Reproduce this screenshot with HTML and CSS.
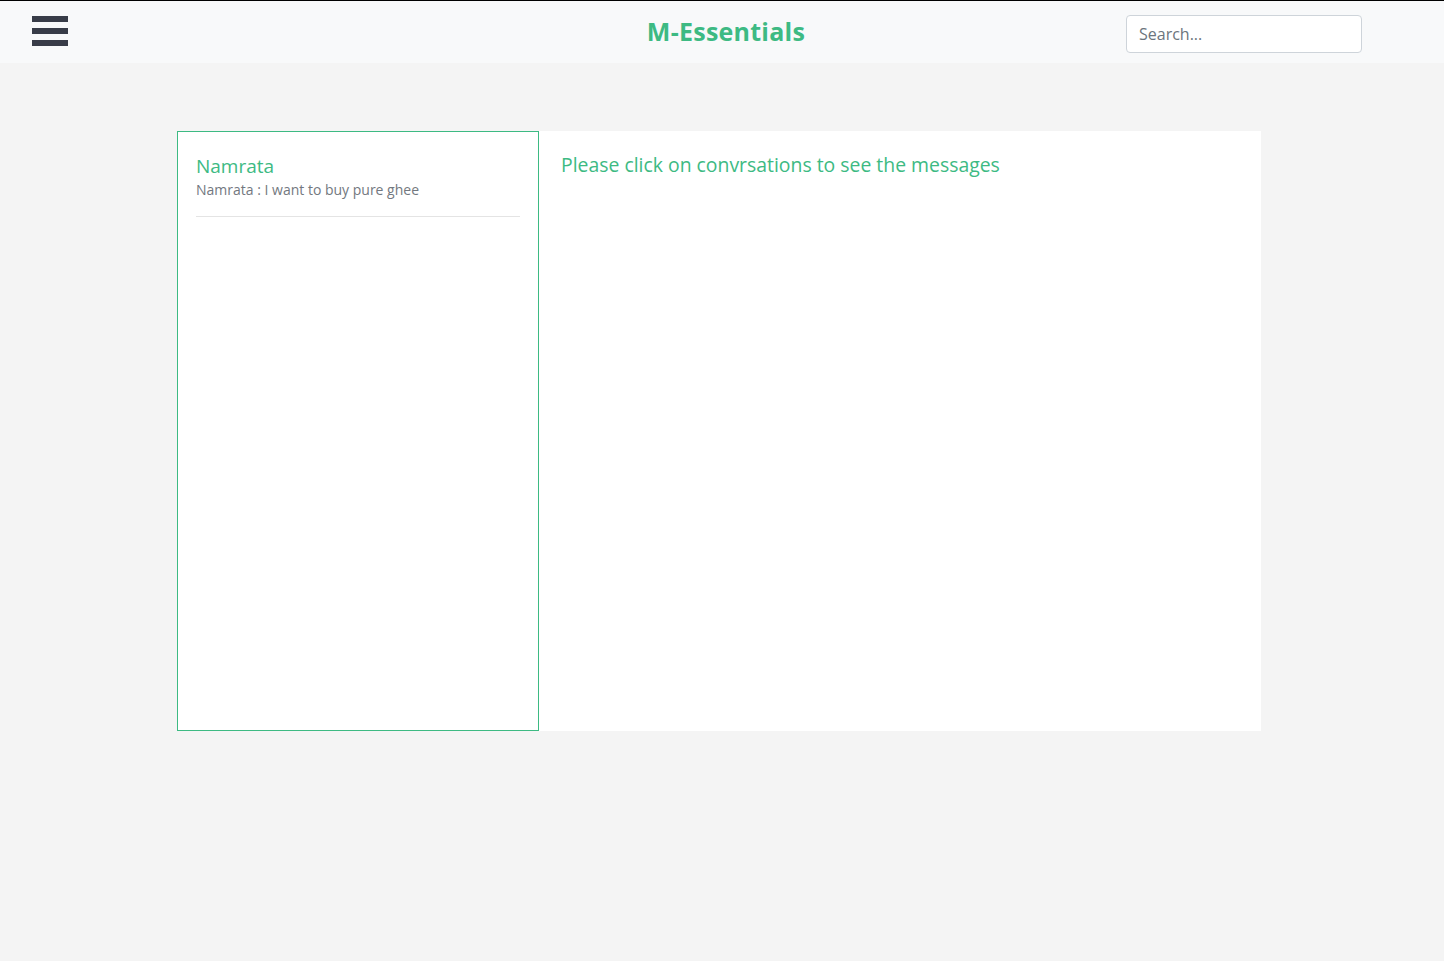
FILE: index.html
```html
<!DOCTYPE html>
<html>
<head>
<meta charset="utf-8">
<link rel="stylesheet" href="styles.css">
</head>
<body>
<header class="topbar">
  <div class="burger"><span></span><span></span><span></span></div>
  <div class="brand">M-Essentials</div>
  <div class="search-wrap"><input class="search" type="text" placeholder="Search..."></div>
</header>
<main class="page">
  <section class="chat">
    <aside class="convs">
      <div class="conv">
        <div class="conv-name">Namrata</div>
        <div class="conv-last">Namrata : I want to buy pure ghee</div>
      </div>
    </aside>
    <div class="messages">
      <p class="hint">Please click on convrsations to see the messages</p>
    </div>
  </section>
</main>
</body>
</html>
```
FILE: styles.css
```css
html, body {
  margin: 0;
  padding: 0;
  background: #f4f4f4;
  font-family: "Open Sans", "Noto Sans", sans-serif;
}
.topbar {
  height: 62px;
  border-top: 1px solid #000;
  background: #f8f9fa;
  display: grid;
  grid-template-columns: 1fr auto 1fr;
  align-items: center;
  padding: 0 82px 0 32px;
}
.burger {
  width: 36px;
  display: flex;
  flex-direction: column;
  gap: 6px;
  margin-top: -3px;
}
.burger span {
  display: block;
  height: 6px;
  background: #383c48;
}
.brand {
  color: #3dba83;
  font-weight: 700;
  font-size: 25px;
  letter-spacing: 0.25px;
  margin-left: 58px;
  margin-top: -2px;
}
.search-wrap {
  display: flex;
  justify-content: flex-end;
}
.search {
  width: 236px;
  height: 38px;
  box-sizing: border-box;
  border: 1px solid #ced4da;
  border-radius: 4px;
  background: #fff;
  padding: 0 12px;
  font-family: inherit;
  font-size: 16px;
  color: #495057;
  margin-top: 3px;
}
.search::placeholder { color: #6c757d; }
.page {
  padding: 68px 0 0 177px;
}
.chat {
  width: 1084px;
  height: 600px;
  display: flex;
  background: #fff;
}
.convs {
  width: 362px;
  box-sizing: border-box;
  border: 1px solid #3dba83;
  padding: 22px 18px 0 18px;
}
.conv {
  border-bottom: 1px solid #e4e4e4;
  padding-bottom: 16px;
}
.conv-name {
  color: #3dba83;
  font-size: 19px;
  line-height: 24px;
}
.conv-last {
  color: #737880;
  font-size: 14px;
  line-height: 20px;
  margin-top: 2px;
}
.messages {
  flex: 1;
  padding: 20px 22px;
}
.hint {
  margin: 0;
  color: #3dba83;
  font-size: 19.4px;
  line-height: 28px;
}
```
